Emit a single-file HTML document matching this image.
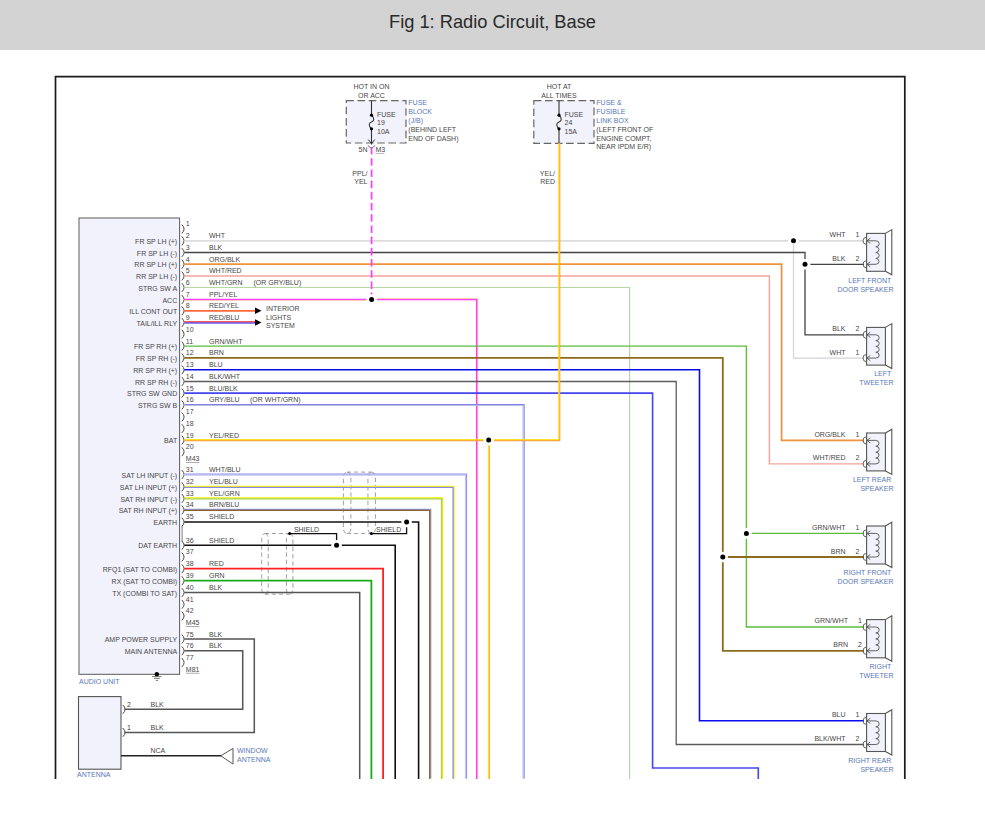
<!DOCTYPE html><html><head><meta charset="utf-8"><style>html,body{margin:0;padding:0;background:#fff;width:985px;height:814px;overflow:hidden}svg{display:block}text{font-family:"Liberation Sans",sans-serif}</style></head><body>
<svg width="985" height="814" viewBox="0 0 985 814">
<rect x="0" y="0" width="985" height="814" fill="#fff"/>
<rect x="0" y="0" width="985" height="50" fill="#d3d3d3"/>
<text x="492.5" y="27.6" text-anchor="middle" fill="#2a2a2a" font-size="18.25">Fig 1: Radio Circuit, Base</text>
<path d="M55.5,779 L55.5,76.7 L904.8,76.7 L904.8,779" fill="none" stroke="#1a1a1a" stroke-width="1.7"/>
<rect x="346.3" y="100.7" width="59.69999999999999" height="42.3" fill="#f2f2fc" stroke="#666" stroke-width="1.2" stroke-dasharray="7.6,3.6"/>
<path d="M371.5,100.7 V115.2 C374.5,118 374.5,121 371.5,122 C368.5,123 368.5,126 371.5,128.8 V144.5" fill="none" stroke="#333" stroke-width="1.1"/>
<circle cx="371.5" cy="115.2" r="1.6" fill="#000"/><circle cx="371.5" cy="128.8" r="1.6" fill="#000"/>
<path d="M368.2,139.5 L371.5,143.5 L374.8,139.5" fill="none" stroke="#333" stroke-width="1"/>
<text x="371.5" y="89.1" text-anchor="middle" fill="#474747" font-size="7">HOT IN ON</text>
<text x="371.5" y="97.7" text-anchor="middle" fill="#474747" font-size="7">OR ACC</text>
<text x="377.0" y="116.8" text-anchor="start" fill="#474747" font-size="7">FUSE</text>
<text x="377.0" y="125.1" text-anchor="start" fill="#474747" font-size="7">19</text>
<text x="377.0" y="134.1" text-anchor="start" fill="#474747" font-size="7">10A</text>
<text x="408.3" y="105.2" text-anchor="start" fill="#5a78b8" font-size="7">FUSE</text>
<text x="408.3" y="114.05" text-anchor="start" fill="#5a78b8" font-size="7">BLOCK</text>
<text x="408.3" y="122.89999999999999" text-anchor="start" fill="#5a78b8" font-size="7">(J/B)</text>
<text x="408.3" y="131.75" text-anchor="start" fill="#474747" font-size="7">(BEHIND LEFT</text>
<text x="408.3" y="140.6" text-anchor="start" fill="#474747" font-size="7">END OF DASH)</text>
<rect x="533.8" y="100.6" width="60.200000000000045" height="42.70000000000002" fill="#f2f2fc" stroke="#666" stroke-width="1.2" stroke-dasharray="7.6,3.6"/>
<path d="M559.0,100.6 V115.2 C562.0,118 562.0,121 559.0,122 C556.0,123 556.0,126 559.0,128.8 V143.3" fill="none" stroke="#333" stroke-width="1.1"/>
<circle cx="559.0" cy="115.2" r="1.6" fill="#000"/><circle cx="559.0" cy="128.8" r="1.6" fill="#000"/>
<text x="559.0" y="89.1" text-anchor="middle" fill="#474747" font-size="7">HOT AT</text>
<text x="559.0" y="97.7" text-anchor="middle" fill="#474747" font-size="7">ALL TIMES</text>
<text x="564.5" y="116.8" text-anchor="start" fill="#474747" font-size="7">FUSE</text>
<text x="564.5" y="125.1" text-anchor="start" fill="#474747" font-size="7">24</text>
<text x="564.5" y="134.1" text-anchor="start" fill="#474747" font-size="7">15A</text>
<text x="596.3" y="105.2" text-anchor="start" fill="#5a78b8" font-size="7">FUSE &amp;</text>
<text x="596.3" y="114.05" text-anchor="start" fill="#5a78b8" font-size="7">FUSIBLE</text>
<text x="596.3" y="122.89999999999999" text-anchor="start" fill="#5a78b8" font-size="7">LINK BOX</text>
<text x="596.3" y="131.75" text-anchor="start" fill="#474747" font-size="7">(LEFT FRONT OF</text>
<text x="596.3" y="140.6" text-anchor="start" fill="#474747" font-size="7">ENGINE COMPT,</text>
<text x="596.3" y="149.45" text-anchor="start" fill="#474747" font-size="7">NEAR IPDM E/R)</text>
<text x="358.5" y="152.1" text-anchor="start" fill="#474747" font-size="7">5N</text>
<path d="M367.8,145.5 L371.5,148.5 L375.2,145.5" fill="none" stroke="#555" stroke-width="0.9"/>
<text x="375.5" y="152.1" text-anchor="start" fill="#474747" font-size="7">M3</text>
<rect x="375.5" y="153" width="9" height="1" fill="#bbb"/>
<text x="367.5" y="176.0" text-anchor="end" fill="#474747" font-size="7">PPL/</text>
<text x="367.5" y="184.1" text-anchor="end" fill="#474747" font-size="7">YEL</text>
<text x="555.0" y="176.0" text-anchor="end" fill="#474747" font-size="7">YEL/</text>
<text x="555.0" y="184.1" text-anchor="end" fill="#474747" font-size="7">RED</text>
<rect x="79" y="218" width="100.6" height="456.3" fill="#f2f2fc" stroke="#5a5a5a" stroke-width="1.0"/>
<text x="177.2" y="243.9" text-anchor="end" fill="#474747" font-size="7">FR SP LH (+)</text>
<text x="177.2" y="255.6" text-anchor="end" fill="#474747" font-size="7">FR SP LH (-)</text>
<text x="177.2" y="267.3" text-anchor="end" fill="#474747" font-size="7">RR SP LH (+)</text>
<text x="177.2" y="279.1" text-anchor="end" fill="#474747" font-size="7">RR SP LH (-)</text>
<text x="177.2" y="290.6" text-anchor="end" fill="#474747" font-size="7">STRG SW A</text>
<text x="177.2" y="302.6" text-anchor="end" fill="#474747" font-size="7">ACC</text>
<text x="177.2" y="313.90000000000003" text-anchor="end" fill="#474747" font-size="7">ILL CONT OUT</text>
<text x="177.2" y="325.6" text-anchor="end" fill="#474747" font-size="7">TAIL/ILL RLY</text>
<text x="177.2" y="349.20000000000005" text-anchor="end" fill="#474747" font-size="7">FR SP RH (+)</text>
<text x="177.2" y="361.0" text-anchor="end" fill="#474747" font-size="7">FR SP RH (-)</text>
<text x="177.2" y="372.90000000000003" text-anchor="end" fill="#474747" font-size="7">RR SP RH (+)</text>
<text x="177.2" y="384.6" text-anchor="end" fill="#474747" font-size="7">RR SP RH (-)</text>
<text x="177.2" y="396.20000000000005" text-anchor="end" fill="#474747" font-size="7">STRG SW GND</text>
<text x="177.2" y="408.1" text-anchor="end" fill="#474747" font-size="7">STRG SW B</text>
<text x="177.2" y="443.20000000000005" text-anchor="end" fill="#474747" font-size="7">BAT</text>
<text x="177.2" y="477.6" text-anchor="end" fill="#474747" font-size="7">SAT LH INPUT (-)</text>
<text x="177.2" y="489.90000000000003" text-anchor="end" fill="#474747" font-size="7">SAT LH INPUT (+)</text>
<text x="177.2" y="501.5" text-anchor="end" fill="#474747" font-size="7">SAT RH INPUT (-)</text>
<text x="177.2" y="513.0" text-anchor="end" fill="#474747" font-size="7">SAT RH INPUT (+)</text>
<text x="177.2" y="525.1" text-anchor="end" fill="#474747" font-size="7">EARTH</text>
<text x="177.2" y="548.4" text-anchor="end" fill="#474747" font-size="7">DAT EARTH</text>
<text x="177.2" y="571.8000000000001" text-anchor="end" fill="#474747" font-size="7">RFQ1 (SAT TO COMBI)</text>
<text x="177.2" y="583.8000000000001" text-anchor="end" fill="#474747" font-size="7">RX (SAT TO COMBI)</text>
<text x="177.2" y="595.6" text-anchor="end" fill="#474747" font-size="7">TX (COMBI TO SAT)</text>
<text x="177.2" y="642.2" text-anchor="end" fill="#474747" font-size="7">AMP POWER SUPPLY</text>
<text x="177.2" y="653.9" text-anchor="end" fill="#474747" font-size="7">MAIN ANTENNA</text>
<text x="185.8" y="226.4" text-anchor="start" fill="#474747" font-size="7">1</text>
<path d="M181.8,224.6 Q186.4,229.0 181.8,233.4" fill="none" stroke="#4a4a4a" stroke-width="1.0"/>
<text x="185.8" y="238.20000000000002" text-anchor="start" fill="#474747" font-size="7">2</text>
<path d="M181.8,236.4 Q186.4,240.8 181.8,245.20000000000002" fill="none" stroke="#4a4a4a" stroke-width="1.0"/>
<text x="185.8" y="249.9" text-anchor="start" fill="#474747" font-size="7">3</text>
<path d="M181.8,248.1 Q186.4,252.5 181.8,256.9" fill="none" stroke="#4a4a4a" stroke-width="1.0"/>
<text x="185.8" y="261.59999999999997" text-anchor="start" fill="#474747" font-size="7">4</text>
<path d="M181.8,259.8 Q186.4,264.2 181.8,268.59999999999997" fill="none" stroke="#4a4a4a" stroke-width="1.0"/>
<text x="185.8" y="273.4" text-anchor="start" fill="#474747" font-size="7">5</text>
<path d="M181.8,271.6 Q186.4,276.0 181.8,280.4" fill="none" stroke="#4a4a4a" stroke-width="1.0"/>
<text x="185.8" y="284.9" text-anchor="start" fill="#474747" font-size="7">6</text>
<path d="M181.8,283.1 Q186.4,287.5 181.8,291.9" fill="none" stroke="#4a4a4a" stroke-width="1.0"/>
<text x="185.8" y="296.9" text-anchor="start" fill="#474747" font-size="7">7</text>
<path d="M181.8,295.1 Q186.4,299.5 181.8,303.9" fill="none" stroke="#4a4a4a" stroke-width="1.0"/>
<text x="185.8" y="308.2" text-anchor="start" fill="#474747" font-size="7">8</text>
<path d="M181.8,306.40000000000003 Q186.4,310.8 181.8,315.2" fill="none" stroke="#4a4a4a" stroke-width="1.0"/>
<text x="185.8" y="319.9" text-anchor="start" fill="#474747" font-size="7">9</text>
<path d="M181.8,318.1 Q186.4,322.5 181.8,326.9" fill="none" stroke="#4a4a4a" stroke-width="1.0"/>
<text x="185.8" y="331.59999999999997" text-anchor="start" fill="#474747" font-size="7">10</text>
<path d="M181.8,329.8 Q186.4,334.2 181.8,338.59999999999997" fill="none" stroke="#4a4a4a" stroke-width="1.0"/>
<text x="185.8" y="343.5" text-anchor="start" fill="#474747" font-size="7">11</text>
<path d="M181.8,341.70000000000005 Q186.4,346.1 181.8,350.5" fill="none" stroke="#4a4a4a" stroke-width="1.0"/>
<text x="185.8" y="355.29999999999995" text-anchor="start" fill="#474747" font-size="7">12</text>
<path d="M181.8,353.5 Q186.4,357.9 181.8,362.29999999999995" fill="none" stroke="#4a4a4a" stroke-width="1.0"/>
<text x="185.8" y="367.2" text-anchor="start" fill="#474747" font-size="7">13</text>
<path d="M181.8,365.40000000000003 Q186.4,369.8 181.8,374.2" fill="none" stroke="#4a4a4a" stroke-width="1.0"/>
<text x="185.8" y="378.9" text-anchor="start" fill="#474747" font-size="7">14</text>
<path d="M181.8,377.1 Q186.4,381.5 181.8,385.9" fill="none" stroke="#4a4a4a" stroke-width="1.0"/>
<text x="185.8" y="390.5" text-anchor="start" fill="#474747" font-size="7">15</text>
<path d="M181.8,388.70000000000005 Q186.4,393.1 181.8,397.5" fill="none" stroke="#4a4a4a" stroke-width="1.0"/>
<text x="185.8" y="402.4" text-anchor="start" fill="#474747" font-size="7">16</text>
<path d="M181.8,400.6 Q186.4,405.0 181.8,409.4" fill="none" stroke="#4a4a4a" stroke-width="1.0"/>
<text x="185.8" y="414.29999999999995" text-anchor="start" fill="#474747" font-size="7">17</text>
<path d="M181.8,412.5 Q186.4,416.9 181.8,421.29999999999995" fill="none" stroke="#4a4a4a" stroke-width="1.0"/>
<text x="185.8" y="426.0" text-anchor="start" fill="#474747" font-size="7">18</text>
<path d="M181.8,424.20000000000005 Q186.4,428.6 181.8,433.0" fill="none" stroke="#4a4a4a" stroke-width="1.0"/>
<text x="185.8" y="437.5" text-anchor="start" fill="#474747" font-size="7">19</text>
<path d="M181.8,435.70000000000005 Q186.4,440.1 181.8,444.5" fill="none" stroke="#4a4a4a" stroke-width="1.0"/>
<text x="185.8" y="449.2" text-anchor="start" fill="#474747" font-size="7">20</text>
<path d="M181.8,447.40000000000003 Q186.4,451.8 181.8,456.2" fill="none" stroke="#4a4a4a" stroke-width="1.0"/>
<text x="185.8" y="471.9" text-anchor="start" fill="#474747" font-size="7">31</text>
<path d="M181.8,470.1 Q186.4,474.5 181.8,478.9" fill="none" stroke="#4a4a4a" stroke-width="1.0"/>
<text x="185.8" y="484.2" text-anchor="start" fill="#474747" font-size="7">32</text>
<path d="M181.8,482.40000000000003 Q186.4,486.8 181.8,491.2" fill="none" stroke="#4a4a4a" stroke-width="1.0"/>
<text x="185.8" y="495.79999999999995" text-anchor="start" fill="#474747" font-size="7">33</text>
<path d="M181.8,494.0 Q186.4,498.4 181.8,502.79999999999995" fill="none" stroke="#4a4a4a" stroke-width="1.0"/>
<text x="185.8" y="507.29999999999995" text-anchor="start" fill="#474747" font-size="7">34</text>
<path d="M181.8,505.5 Q186.4,509.9 181.8,514.3" fill="none" stroke="#4a4a4a" stroke-width="1.0"/>
<text x="185.8" y="519.4" text-anchor="start" fill="#474747" font-size="7">35</text>
<path d="M181.8,517.6 Q186.4,522.0 181.8,526.4" fill="none" stroke="#4a4a4a" stroke-width="1.0"/>
<text x="185.8" y="542.6999999999999" text-anchor="start" fill="#474747" font-size="7">36</text>
<path d="M181.8,540.9 Q186.4,545.3 181.8,549.6999999999999" fill="none" stroke="#4a4a4a" stroke-width="1.0"/>
<text x="185.8" y="554.4" text-anchor="start" fill="#474747" font-size="7">37</text>
<path d="M181.8,552.6 Q186.4,557.0 181.8,561.4" fill="none" stroke="#4a4a4a" stroke-width="1.0"/>
<text x="185.8" y="566.1" text-anchor="start" fill="#474747" font-size="7">38</text>
<path d="M181.8,564.3000000000001 Q186.4,568.7 181.8,573.1" fill="none" stroke="#4a4a4a" stroke-width="1.0"/>
<text x="185.8" y="578.1" text-anchor="start" fill="#474747" font-size="7">39</text>
<path d="M181.8,576.3000000000001 Q186.4,580.7 181.8,585.1" fill="none" stroke="#4a4a4a" stroke-width="1.0"/>
<text x="185.8" y="589.9" text-anchor="start" fill="#474747" font-size="7">40</text>
<path d="M181.8,588.1 Q186.4,592.5 181.8,596.9" fill="none" stroke="#4a4a4a" stroke-width="1.0"/>
<text x="185.8" y="601.6999999999999" text-anchor="start" fill="#474747" font-size="7">41</text>
<path d="M181.8,599.9 Q186.4,604.3 181.8,608.6999999999999" fill="none" stroke="#4a4a4a" stroke-width="1.0"/>
<text x="185.8" y="613.4" text-anchor="start" fill="#474747" font-size="7">42</text>
<path d="M181.8,611.6 Q186.4,616.0 181.8,620.4" fill="none" stroke="#4a4a4a" stroke-width="1.0"/>
<text x="185.8" y="636.5" text-anchor="start" fill="#474747" font-size="7">75</text>
<path d="M181.8,634.7 Q186.4,639.1 181.8,643.5" fill="none" stroke="#4a4a4a" stroke-width="1.0"/>
<text x="185.8" y="648.1999999999999" text-anchor="start" fill="#474747" font-size="7">76</text>
<path d="M181.8,646.4 Q186.4,650.8 181.8,655.1999999999999" fill="none" stroke="#4a4a4a" stroke-width="1.0"/>
<text x="185.8" y="659.9" text-anchor="start" fill="#474747" font-size="7">77</text>
<path d="M181.8,658.1 Q186.4,662.5 181.8,666.9" fill="none" stroke="#4a4a4a" stroke-width="1.0"/>
<path d="M182.1,526.0 V541.3" fill="none" stroke="#5a5a5a" stroke-width="0.8"/>
<text x="209" y="238.20000000000002" text-anchor="start" fill="#474747" font-size="7">WHT</text>
<text x="209" y="249.9" text-anchor="start" fill="#474747" font-size="7">BLK</text>
<text x="209" y="261.59999999999997" text-anchor="start" fill="#474747" font-size="7">ORG/BLK</text>
<text x="209" y="273.4" text-anchor="start" fill="#474747" font-size="7">WHT/RED</text>
<text x="209" y="284.9" text-anchor="start" fill="#474747" font-size="7">WHT/GRN</text>
<text x="209" y="296.9" text-anchor="start" fill="#474747" font-size="7">PPL/YEL</text>
<text x="209" y="308.2" text-anchor="start" fill="#474747" font-size="7">RED/YEL</text>
<text x="209" y="319.9" text-anchor="start" fill="#474747" font-size="7">RED/BLU</text>
<text x="209" y="343.5" text-anchor="start" fill="#474747" font-size="7">GRN/WHT</text>
<text x="209" y="355.29999999999995" text-anchor="start" fill="#474747" font-size="7">BRN</text>
<text x="209" y="367.2" text-anchor="start" fill="#474747" font-size="7">BLU</text>
<text x="209" y="378.9" text-anchor="start" fill="#474747" font-size="7">BLK/WHT</text>
<text x="209" y="390.5" text-anchor="start" fill="#474747" font-size="7">BLU/BLK</text>
<text x="209" y="402.4" text-anchor="start" fill="#474747" font-size="7">GRY/BLU</text>
<text x="209" y="437.5" text-anchor="start" fill="#474747" font-size="7">YEL/RED</text>
<text x="209" y="471.9" text-anchor="start" fill="#474747" font-size="7">WHT/BLU</text>
<text x="209" y="484.2" text-anchor="start" fill="#474747" font-size="7">YEL/BLU</text>
<text x="209" y="495.79999999999995" text-anchor="start" fill="#474747" font-size="7">YEL/GRN</text>
<text x="209" y="507.29999999999995" text-anchor="start" fill="#474747" font-size="7">BRN/BLU</text>
<text x="209" y="519.4" text-anchor="start" fill="#474747" font-size="7">SHIELD</text>
<text x="209" y="542.6999999999999" text-anchor="start" fill="#474747" font-size="7">SHIELD</text>
<text x="209" y="566.1" text-anchor="start" fill="#474747" font-size="7">RED</text>
<text x="209" y="578.1" text-anchor="start" fill="#474747" font-size="7">GRN</text>
<text x="209" y="589.9" text-anchor="start" fill="#474747" font-size="7">BLK</text>
<text x="209" y="636.5" text-anchor="start" fill="#474747" font-size="7">BLK</text>
<text x="209" y="648.1999999999999" text-anchor="start" fill="#474747" font-size="7">BLK</text>
<text x="253.5" y="284.9" text-anchor="start" fill="#474747" font-size="7">(OR GRY/BLU)</text>
<text x="250" y="402.4" text-anchor="start" fill="#474747" font-size="7">(OR WHT/GRN)</text>
<text x="185.8" y="461.1" text-anchor="start" fill="#474747" font-size="7">M43</text>
<rect x="185.8" y="462.1" width="13.5" height="0.8" fill="#999"/>
<text x="185.8" y="625.2" text-anchor="start" fill="#474747" font-size="7">M45</text>
<rect x="185.8" y="626.2" width="13.5" height="0.8" fill="#999"/>
<text x="185.8" y="671.8" text-anchor="start" fill="#474747" font-size="7">M81</text>
<rect x="185.8" y="672.8" width="13.5" height="0.8" fill="#999"/>
<text x="79" y="683.5" text-anchor="start" fill="#5a78b8" font-size="7">AUDIO UNIT</text>
<circle cx="156.8" cy="674.3" r="2.2" fill="#000"/>
<path d="M152,676.6 H161.5 M154,678.4 H159.8 M155.8,680.4 H158" stroke="#555" stroke-width="0.8" fill="none"/>
<rect x="343.4" y="472.1" width="7.5" height="61.39999999999998" rx="3.75" ry="5" fill="none" stroke="#8a8a8a" stroke-width="0.8" stroke-dasharray="4.5,2.8"/>
<rect x="367.95" y="472.1" width="7.5" height="61.39999999999998" rx="3.75" ry="5" fill="none" stroke="#8a8a8a" stroke-width="0.8" stroke-dasharray="4.5,2.8"/>
<path d="M347.15,472.1 H371.7 M347.15,533.5 H371.7" stroke="#8a8a8a" stroke-width="0.8" stroke-dasharray="4,3" fill="none"/>
<rect x="261.7" y="533.5" width="6.5" height="60.700000000000045" rx="3.25" ry="5" fill="none" stroke="#8a8a8a" stroke-width="0.8" stroke-dasharray="4.5,2.8"/>
<rect x="286.45" y="533.5" width="6.5" height="60.700000000000045" rx="3.25" ry="5" fill="none" stroke="#8a8a8a" stroke-width="0.8" stroke-dasharray="4.5,2.8"/>
<path d="M264.95,533.5 H289.7 M264.95,594.2 H289.7" stroke="#8a8a8a" stroke-width="0.8" stroke-dasharray="4,3" fill="none"/>
<path d="M184.3,240.8 L864,240.8" fill="none" stroke="#dcdcdc" stroke-width="1.8"/>
<path d="M793.5,240.8 L793.5,358.1 L864,358.1" fill="none" stroke="#d4d4d4" stroke-width="1.2"/>
<path d="M184.3,252.5 L805,252.5 L805,334.8 L864,334.8" fill="none" stroke="#444" stroke-width="1.3"/>
<path d="M805,264.3 L864,264.3" fill="none" stroke="#444" stroke-width="1.3"/>
<path d="M184.3,264.2 L781.6,264.2 L781.6,440.4 L864,440.4" fill="none" stroke="#f0923c" stroke-width="1.7"/>
<path d="M184.3,276.0 L769.4,276.0 L769.4,463.9 L864,463.9" fill="none" stroke="#f2a49c" stroke-width="1.4"/>
<path d="M184.3,287.5 L629.6,287.5 L629.6,779" fill="none" stroke="#b4d8a4" stroke-width="1.2"/>
<path d="M184.3,299.5 L476.8,299.5 L476.8,779" fill="none" stroke="#ff3cff" stroke-width="1.7"/>
<path d="M184.3,300.5 L371.6,300.5" fill="none" stroke="#ffd060" stroke-width="0.5"/>
<path d="M371.6,298.5 L477.8,298.5 L477.8,779" fill="none" stroke="#ffd060" stroke-width="0.5"/>
<path d="M184.3,310.8 L256,310.8" fill="none" stroke="#ff6a3a" stroke-width="1.8"/>
<path d="M184.3,321.95 L256,321.95" fill="none" stroke="#ff2020" stroke-width="1.4000000000000001"/>
<path d="M184.3,323.05 L256,323.05" fill="none" stroke="#6a5af0" stroke-width="1.4000000000000001"/>
<path d="M184.3,346.1 L746.4,346.1 L746.4,627.0 L864,627.0" fill="none" stroke="#5cbc3c" stroke-width="1.4"/>
<path d="M746.4,533.4 L864,533.4" fill="none" stroke="#5cbc3c" stroke-width="1.4"/>
<path d="M184.3,357.9 L722.8,357.9 L722.8,650.8 L864,650.8" fill="none" stroke="#8c6c1c" stroke-width="1.8"/>
<path d="M722.8,557.0 L864,557.0" fill="none" stroke="#8c6c1c" stroke-width="1.8"/>
<path d="M184.3,369.8 L699.5,369.8 L699.5,720.7 L864,720.7" fill="none" stroke="#0a0af0" stroke-width="1.6"/>
<path d="M184.3,381.5 L676.2,381.5 L676.2,744.5 L864,744.5" fill="none" stroke="#5c5c5c" stroke-width="1.3"/>
<path d="M184.3,393.1 L652.6,393.1 L652.6,768.0 L758.3,768.0 L758.3,779" fill="none" stroke="#4444ee" stroke-width="1.6"/>
<path d="M184.8,404.5 L524.1,404.5 L524.1,778.5" fill="none" stroke="#8282ee" stroke-width="1.2"/>
<path d="M183.8,405.5 L523.1,405.5 L523.1,779.5" fill="none" stroke="#bcbcdc" stroke-width="1.2"/>
<path d="M184.3,440.40000000000003 L559.5,440.40000000000003 L559.5,143.3" fill="none" stroke="#ff9848" stroke-width="1.7"/>
<path d="M184.3,439.8 L558.9,439.8 L558.9,143.3" fill="none" stroke="#ffe800" stroke-width="1.1"/>
<path d="M489.0,440.1 L489.0,779" fill="none" stroke="#ff9848" stroke-width="1.7"/>
<path d="M488.4,440.1 L488.4,779" fill="none" stroke="#ffe800" stroke-width="1.1"/>
<path d="M184.8,474.0 L466.5,474.0 L466.5,778.5" fill="none" stroke="#9090ec" stroke-width="1.25"/>
<path d="M183.8,475.0 L465.5,475.0 L465.5,779.5" fill="none" stroke="#c4c4f4" stroke-width="1.25"/>
<path d="M184.8,486.3 L454.1,486.3 L454.1,778.5" fill="none" stroke="#ffff00" stroke-width="1.3"/>
<path d="M183.8,487.3 L453.1,487.3 L453.1,779.5" fill="none" stroke="#8a8ae4" stroke-width="1.3"/>
<path d="M184.8,497.9 L442.5,497.9 L442.5,778.5" fill="none" stroke="#f4f400" stroke-width="1.3"/>
<path d="M183.8,498.9 L441.5,498.9 L441.5,779.5" fill="none" stroke="#a8d048" stroke-width="1.3"/>
<path d="M184.8,509.4 L430.7,509.4 L430.7,778.5" fill="none" stroke="#9494e6" stroke-width="1.3"/>
<path d="M183.8,510.4 L429.7,510.4 L429.7,779.5" fill="none" stroke="#8a6424" stroke-width="1.3"/>
<path d="M184.3,522.0 L418.6,522.0 L418.6,779" fill="none" stroke="#111" stroke-width="1.6"/>
<path d="M406.6,522.0 L406.6,533.6 L371.4,533.6" fill="none" stroke="#111" stroke-width="1.3"/>
<path d="M184.3,545.3 L395.2,545.3 L395.2,779" fill="none" stroke="#111" stroke-width="1.6"/>
<path d="M336.6,545.3 L336.6,533.6 L289.7,533.6" fill="none" stroke="#111" stroke-width="1.3"/>
<path d="M184.3,568.7 L383.1,568.7 L383.1,779" fill="none" stroke="#ff2020" stroke-width="1.8"/>
<path d="M184.3,580.7 L371.4,580.7 L371.4,779" fill="none" stroke="#18aa18" stroke-width="1.8"/>
<path d="M184.3,592.5 L359.7,592.5 L359.7,779" fill="none" stroke="#555555" stroke-width="1.5"/>
<path d="M184.3,639.1 L254.3,639.1 L254.3,732.4 L124.5,732.4" fill="none" stroke="#555555" stroke-width="1.5"/>
<path d="M184.3,650.8 L242.7,650.8 L242.7,709.3 L124.5,709.3" fill="none" stroke="#555555" stroke-width="1.5"/>
<path d="M371.6,147 V299.5" stroke="#ff3cff" stroke-width="1.7" stroke-dasharray="7.6,3.6" fill="none"/>
<path d="M255,307.5 L261.5,310.8 L255,314.1 Z" fill="#000"/>
<path d="M255,319.2 L261.5,322.5 L255,325.8 Z" fill="#000"/>
<text x="266" y="311.0" text-anchor="start" fill="#474747" font-size="7">INTERIOR</text>
<text x="266" y="319.9" text-anchor="start" fill="#474747" font-size="7">LIGHTS</text>
<text x="266" y="327.9" text-anchor="start" fill="#474747" font-size="7">SYSTEM</text>
<text x="376" y="531.8" text-anchor="start" fill="#474747" font-size="7">SHIELD</text>
<text x="293.9" y="531.8" text-anchor="start" fill="#474747" font-size="7">SHIELD</text>
<circle cx="371.6" cy="299.5" r="5.3" fill="#fff"/>
<circle cx="371.6" cy="299.5" r="2.5" fill="#000"/>
<circle cx="488.7" cy="440.1" r="5.3" fill="#fff"/>
<circle cx="488.7" cy="440.1" r="2.5" fill="#000"/>
<circle cx="793.5" cy="240.8" r="5.3" fill="#fff"/>
<circle cx="793.5" cy="240.8" r="2.5" fill="#000"/>
<circle cx="805" cy="264.3" r="5.3" fill="#fff"/>
<circle cx="805" cy="264.3" r="2.5" fill="#000"/>
<circle cx="746.4" cy="533.4" r="5.3" fill="#fff"/>
<circle cx="746.4" cy="533.4" r="2.5" fill="#000"/>
<circle cx="722.8" cy="557.0" r="5.3" fill="#fff"/>
<circle cx="722.8" cy="557.0" r="2.5" fill="#000"/>
<circle cx="406.6" cy="522.0" r="5.3" fill="#fff"/>
<circle cx="406.6" cy="522.0" r="2.5" fill="#000"/>
<circle cx="336.6" cy="545.3" r="5.3" fill="#fff"/>
<circle cx="336.6" cy="545.3" r="2.5" fill="#000"/>
<circle cx="371.4" cy="533.6" r="1.5" fill="#000"/>
<circle cx="289.7" cy="533.6" r="1.5" fill="#000"/>
<path d="M793.5,242.8 L793.5,246.8" fill="none" stroke="#d4d4d4" stroke-width="1.2"/>
<path d="M885.4,233.4 L891.8,229.6 V274.8 L885.4,271.3" fill="#fff" stroke="#555" stroke-width="1.1"/>
<rect x="866.6" y="233.4" width="18.8" height="37.900000000000006" fill="#f2f2fc" stroke="#555" stroke-width="1.1"/>
<path d="M866.6,237.20000000000002 A3.6,3.6 0 0 0 866.6,244.4" fill="none" stroke="#555" stroke-width="0.9"/>
<path d="M870.3,238.20000000000002 L866.9,240.8 L870.3,243.4" fill="none" stroke="#555" stroke-width="0.9"/>
<path d="M866.6,260.7 A3.6,3.6 0 0 0 866.6,267.90000000000003" fill="none" stroke="#555" stroke-width="0.9"/>
<path d="M870.3,261.7 L866.9,264.3 L870.3,266.90000000000003" fill="none" stroke="#555" stroke-width="0.9"/>
<path d="M866.9,240.8 H875.8 A3.4,2.94 0 0 1 875.8,246.68 A3.4,2.94 0 0 1 875.8,252.55 A3.4,2.94 0 0 1 875.8,258.43 A3.4,2.94 0 0 1 875.8,264.30 H866.9" fill="none" stroke="#555" stroke-width="0.9"/>
<text x="845.5" y="237.10000000000002" text-anchor="end" fill="#474747" font-size="7">WHT</text>
<text x="857.5" y="237.10000000000002" text-anchor="middle" fill="#474747" font-size="7">1</text>
<text x="845.5" y="260.8" text-anchor="end" fill="#474747" font-size="7">BLK</text>
<text x="857.5" y="260.8" text-anchor="middle" fill="#474747" font-size="7">2</text>
<text x="891.3" y="282.6" text-anchor="end" fill="#5a78b8" font-size="7">LEFT FRONT</text>
<text x="893.5" y="291.6" text-anchor="end" fill="#5a78b8" font-size="7">DOOR SPEAKER</text>
<path d="M885.4,327.40000000000003 L891.8,323.6 V368.6 L885.4,365.1" fill="#fff" stroke="#555" stroke-width="1.1"/>
<rect x="866.6" y="327.40000000000003" width="18.8" height="37.69999999999999" fill="#f2f2fc" stroke="#555" stroke-width="1.1"/>
<path d="M866.6,331.2 A3.6,3.6 0 0 0 866.6,338.40000000000003" fill="none" stroke="#555" stroke-width="0.9"/>
<path d="M870.3,332.2 L866.9,334.8 L870.3,337.40000000000003" fill="none" stroke="#555" stroke-width="0.9"/>
<path d="M866.6,354.5 A3.6,3.6 0 0 0 866.6,361.70000000000005" fill="none" stroke="#555" stroke-width="0.9"/>
<path d="M870.3,355.5 L866.9,358.1 L870.3,360.70000000000005" fill="none" stroke="#555" stroke-width="0.9"/>
<path d="M866.9,334.8 H875.8 A3.4,2.91 0 0 1 875.8,340.62 A3.4,2.91 0 0 1 875.8,346.45 A3.4,2.91 0 0 1 875.8,352.27 A3.4,2.91 0 0 1 875.8,358.10 H866.9" fill="none" stroke="#555" stroke-width="0.9"/>
<text x="845.5" y="331.1" text-anchor="end" fill="#474747" font-size="7">BLK</text>
<text x="857.5" y="331.1" text-anchor="middle" fill="#474747" font-size="7">2</text>
<text x="845.5" y="354.6" text-anchor="end" fill="#474747" font-size="7">WHT</text>
<text x="857.5" y="354.6" text-anchor="middle" fill="#474747" font-size="7">1</text>
<text x="891.3" y="376.40000000000003" text-anchor="end" fill="#5a78b8" font-size="7">LEFT</text>
<text x="893.5" y="385.40000000000003" text-anchor="end" fill="#5a78b8" font-size="7">TWEETER</text>
<path d="M885.4,433.0 L891.8,429.2 V474.4 L885.4,470.9" fill="#fff" stroke="#555" stroke-width="1.1"/>
<rect x="866.6" y="433.0" width="18.8" height="37.89999999999998" fill="#f2f2fc" stroke="#555" stroke-width="1.1"/>
<path d="M866.6,436.79999999999995 A3.6,3.6 0 0 0 866.6,444.0" fill="none" stroke="#555" stroke-width="0.9"/>
<path d="M870.3,437.79999999999995 L866.9,440.4 L870.3,443.0" fill="none" stroke="#555" stroke-width="0.9"/>
<path d="M866.6,460.29999999999995 A3.6,3.6 0 0 0 866.6,467.5" fill="none" stroke="#555" stroke-width="0.9"/>
<path d="M870.3,461.29999999999995 L866.9,463.9 L870.3,466.5" fill="none" stroke="#555" stroke-width="0.9"/>
<path d="M866.9,440.4 H875.8 A3.4,2.94 0 0 1 875.8,446.27 A3.4,2.94 0 0 1 875.8,452.15 A3.4,2.94 0 0 1 875.8,458.02 A3.4,2.94 0 0 1 875.8,463.90 H866.9" fill="none" stroke="#555" stroke-width="0.9"/>
<text x="845.5" y="436.7" text-anchor="end" fill="#474747" font-size="7">ORG/BLK</text>
<text x="857.5" y="436.7" text-anchor="middle" fill="#474747" font-size="7">1</text>
<text x="845.5" y="460.4" text-anchor="end" fill="#474747" font-size="7">WHT/RED</text>
<text x="857.5" y="460.4" text-anchor="middle" fill="#474747" font-size="7">2</text>
<text x="891.3" y="482.2" text-anchor="end" fill="#5a78b8" font-size="7">LEFT REAR</text>
<text x="893.5" y="491.2" text-anchor="end" fill="#5a78b8" font-size="7">SPEAKER</text>
<path d="M885.4,526.0 L891.8,522.2 V567.5 L885.4,564.0" fill="#fff" stroke="#555" stroke-width="1.1"/>
<rect x="866.6" y="526.0" width="18.8" height="38.0" fill="#f2f2fc" stroke="#555" stroke-width="1.1"/>
<path d="M866.6,529.8 A3.6,3.6 0 0 0 866.6,537.0" fill="none" stroke="#555" stroke-width="0.9"/>
<path d="M870.3,530.8 L866.9,533.4 L870.3,536.0" fill="none" stroke="#555" stroke-width="0.9"/>
<path d="M866.6,553.4 A3.6,3.6 0 0 0 866.6,560.6" fill="none" stroke="#555" stroke-width="0.9"/>
<path d="M870.3,554.4 L866.9,557.0 L870.3,559.6" fill="none" stroke="#555" stroke-width="0.9"/>
<path d="M866.9,533.4 H875.8 A3.4,2.95 0 0 1 875.8,539.30 A3.4,2.95 0 0 1 875.8,545.20 A3.4,2.95 0 0 1 875.8,551.10 A3.4,2.95 0 0 1 875.8,557.00 H866.9" fill="none" stroke="#555" stroke-width="0.9"/>
<text x="845.5" y="529.6999999999999" text-anchor="end" fill="#474747" font-size="7">GRN/WHT</text>
<text x="857.5" y="529.6999999999999" text-anchor="middle" fill="#474747" font-size="7">1</text>
<text x="845.5" y="553.5" text-anchor="end" fill="#474747" font-size="7">BRN</text>
<text x="857.5" y="553.5" text-anchor="middle" fill="#474747" font-size="7">2</text>
<text x="891.3" y="575.3" text-anchor="end" fill="#5a78b8" font-size="7">RIGHT FRONT</text>
<text x="893.5" y="584.3" text-anchor="end" fill="#5a78b8" font-size="7">DOOR SPEAKER</text>
<path d="M885.4,619.6 L891.8,615.8000000000001 V661.3 L885.4,657.8" fill="#fff" stroke="#555" stroke-width="1.1"/>
<rect x="866.6" y="619.6" width="18.8" height="38.19999999999993" fill="#f2f2fc" stroke="#555" stroke-width="1.1"/>
<path d="M866.6,623.4 A3.6,3.6 0 0 0 866.6,630.6" fill="none" stroke="#555" stroke-width="0.9"/>
<path d="M870.3,624.4 L866.9,627.0 L870.3,629.6" fill="none" stroke="#555" stroke-width="0.9"/>
<path d="M866.6,647.1999999999999 A3.6,3.6 0 0 0 866.6,654.4" fill="none" stroke="#555" stroke-width="0.9"/>
<path d="M870.3,648.1999999999999 L866.9,650.8 L870.3,653.4" fill="none" stroke="#555" stroke-width="0.9"/>
<path d="M866.9,627.0 H875.8 A3.4,2.97 0 0 1 875.8,632.95 A3.4,2.97 0 0 1 875.8,638.90 A3.4,2.97 0 0 1 875.8,644.85 A3.4,2.97 0 0 1 875.8,650.80 H866.9" fill="none" stroke="#555" stroke-width="0.9"/>
<text x="848.0" y="623.3" text-anchor="end" fill="#474747" font-size="7">GRN/WHT</text>
<text x="860.0" y="623.3" text-anchor="middle" fill="#474747" font-size="7">1</text>
<text x="848.0" y="647.3" text-anchor="end" fill="#474747" font-size="7">BRN</text>
<text x="860.0" y="647.3" text-anchor="middle" fill="#474747" font-size="7">2</text>
<text x="891.3" y="669.0999999999999" text-anchor="end" fill="#5a78b8" font-size="7">RIGHT</text>
<text x="893.5" y="678.0999999999999" text-anchor="end" fill="#5a78b8" font-size="7">TWEETER</text>
<path d="M885.4,713.5 L891.8,709.7 V755.0 L885.4,751.5" fill="#fff" stroke="#555" stroke-width="1.1"/>
<rect x="866.6" y="713.5" width="18.8" height="38.0" fill="#f2f2fc" stroke="#555" stroke-width="1.1"/>
<path d="M866.6,717.3 A3.6,3.6 0 0 0 866.6,724.5" fill="none" stroke="#555" stroke-width="0.9"/>
<path d="M870.3,718.3 L866.9,720.9 L870.3,723.5" fill="none" stroke="#555" stroke-width="0.9"/>
<path d="M866.6,740.9 A3.6,3.6 0 0 0 866.6,748.1" fill="none" stroke="#555" stroke-width="0.9"/>
<path d="M870.3,741.9 L866.9,744.5 L870.3,747.1" fill="none" stroke="#555" stroke-width="0.9"/>
<path d="M866.9,720.9 H875.8 A3.4,2.95 0 0 1 875.8,726.80 A3.4,2.95 0 0 1 875.8,732.70 A3.4,2.95 0 0 1 875.8,738.60 A3.4,2.95 0 0 1 875.8,744.50 H866.9" fill="none" stroke="#555" stroke-width="0.9"/>
<text x="845.5" y="717.1999999999999" text-anchor="end" fill="#474747" font-size="7">BLU</text>
<text x="857.5" y="717.1999999999999" text-anchor="middle" fill="#474747" font-size="7">1</text>
<text x="845.5" y="741.0" text-anchor="end" fill="#474747" font-size="7">BLK/WHT</text>
<text x="857.5" y="741.0" text-anchor="middle" fill="#474747" font-size="7">2</text>
<text x="891.3" y="762.8" text-anchor="end" fill="#5a78b8" font-size="7">RIGHT REAR</text>
<text x="893.5" y="771.8" text-anchor="end" fill="#5a78b8" font-size="7">SPEAKER</text>
<rect x="78.5" y="696.6" width="42.5" height="72.6" fill="#f2f2fc" stroke="#555" stroke-width="1.1"/>
<path d="M122.8,704.9 Q127.4,709.3 122.8,713.6999999999999" fill="none" stroke="#4a4a4a" stroke-width="1.0"/>
<text x="127" y="706.6999999999999" text-anchor="start" fill="#474747" font-size="7">2</text>
<text x="150.5" y="706.6999999999999" text-anchor="start" fill="#474747" font-size="7">BLK</text>
<path d="M122.8,728.0 Q127.4,732.4 122.8,736.8" fill="none" stroke="#4a4a4a" stroke-width="1.0"/>
<text x="127" y="729.8" text-anchor="start" fill="#474747" font-size="7">1</text>
<text x="150.5" y="729.8" text-anchor="start" fill="#474747" font-size="7">BLK</text>
<path d="M121,755.8 L221,755.8" fill="none" stroke="#222" stroke-width="1.5"/>
<path d="M233,748.4 L220.8,755.8 L233,764 Z" fill="none" stroke="#555" stroke-width="1"/>
<text x="150.5" y="753.2" text-anchor="start" fill="#474747" font-size="7">NCA</text>
<text x="237" y="752.6" text-anchor="start" fill="#5a78b8" font-size="7">WINDOW</text>
<text x="237" y="761.6" text-anchor="start" fill="#5a78b8" font-size="7">ANTENNA</text>
<text x="77" y="777" text-anchor="start" fill="#5a78b8" font-size="7">ANTENNA</text>
<rect x="0" y="779" width="985" height="35" fill="#fff"/>
</svg></body></html>
